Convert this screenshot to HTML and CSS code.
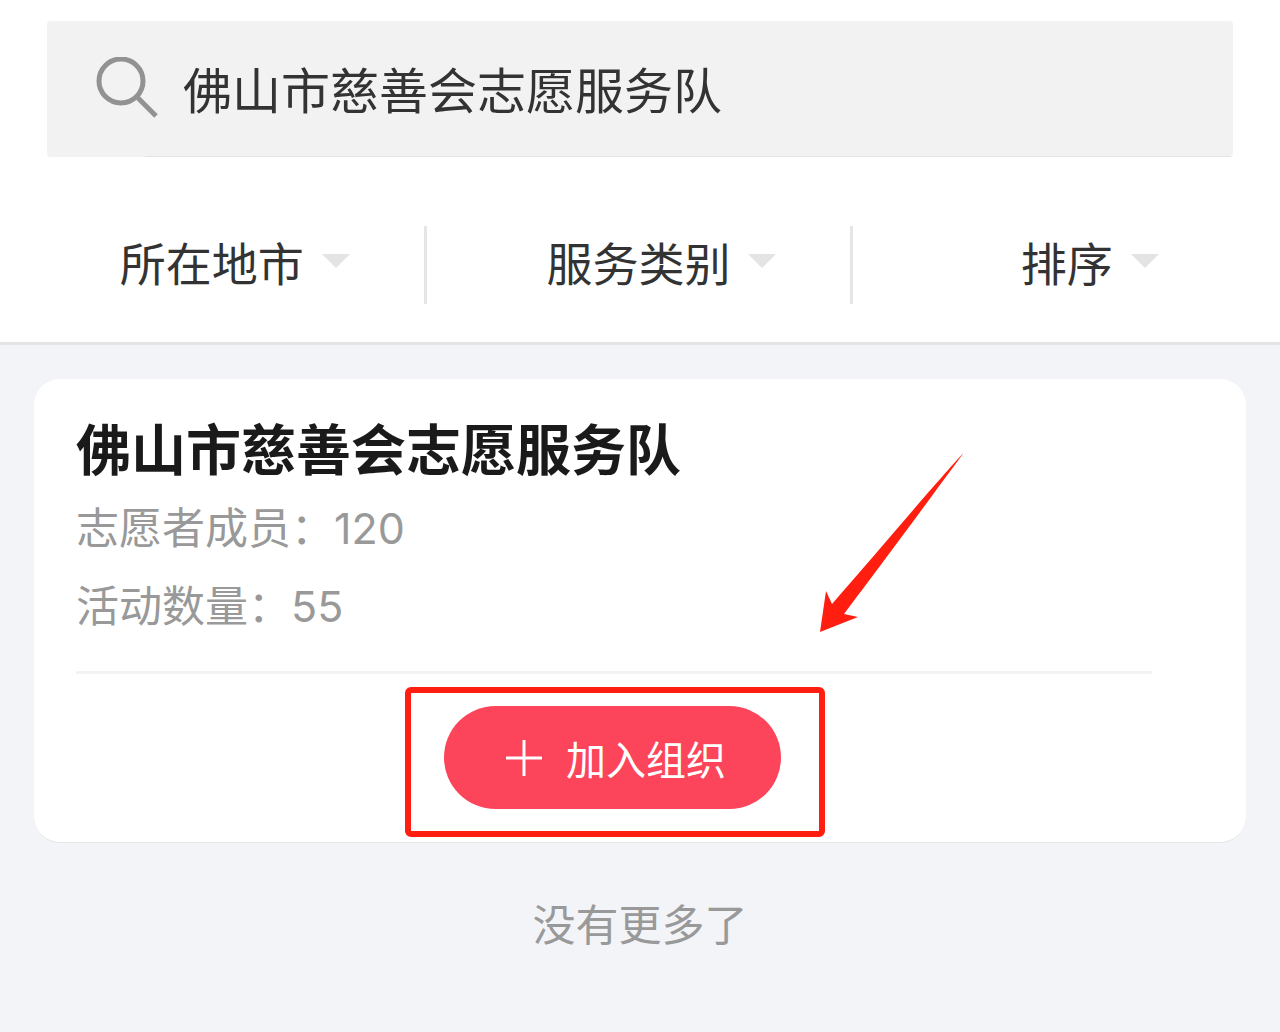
FILE: index.html
```html
<!DOCTYPE html>
<html lang="zh-CN">
<head>
<meta charset="utf-8">
<meta name="viewport" content="width=device-width, initial-scale=1">
<title>佛山市慈善会志愿服务队</title>
<link rel="stylesheet" href="styles.css">
</head>
<body>
<header class="header">
  <form class="search" role="search">
    <svg class="search-icon" viewBox="0 0 64 64" aria-hidden="true">
      <circle cx="26" cy="24" r="22"/>
      <path d="M41 39L61 59"/>
    </svg>
    <input class="search-input" type="text" aria-label="搜索组织" value="佛山市慈善会志愿服务队">
  </form>
  <div class="filters">
    <div class="filter">
      <select class="filter-select" aria-label="所在地市"><option>所在地市</option></select>
      <svg class="caret" viewBox="0 0 28 14" aria-hidden="true"><path d="M0 0H28L14 14Z"/></svg>
    </div>
    <div class="filter">
      <select class="filter-select" aria-label="服务类别"><option>服务类别</option></select>
      <svg class="caret" viewBox="0 0 28 14" aria-hidden="true"><path d="M0 0H28L14 14Z"/></svg>
    </div>
    <div class="filter">
      <select class="filter-select" aria-label="排序"><option>排序</option></select>
      <svg class="caret" viewBox="0 0 28 14" aria-hidden="true"><path d="M0 0H28L14 14Z"/></svg>
    </div>
  </div>
</header>
<main class="results">
  <article class="card">
    <h1 class="card-title">佛山市慈善会志愿服务队</h1>
    <p class="card-info">志愿者成员：120</p>
    <p class="card-info">活动数量：55</p>
    <div class="card-actions">
      <div class="join">
        <button class="join-button" type="button">
          <svg class="plus" viewBox="0 0 36 36" aria-hidden="true"><path d="M18 0V36M0 18H36"/></svg>
          加入组织
        </button>
        <span class="highlight"></span>
        <svg class="arrow" viewBox="0 0 144 180" aria-hidden="true"><path d="M143.500 1C118 28 55 103 12 152L6 139L0 180L38 165L24 162C58 117 112 44 143.500 1Z"/></svg>
      </div>
    </div>
  </article>
  <p class="end">没有更多了</p>
</main>
</body>
</html>
```
FILE: styles.css
```css
* {
  box-sizing: border-box;
}

body {
  margin: 0;
  min-height: 100vh;
  background: #f3f4f8;
  color: #333;
  font-family: Inter, "Noto Sans CJK SC", sans-serif;
}

.header {
  padding: 21px 0 38px;
  background: #fff;
  border-bottom: 3px solid #e4e4e6;
}

.search {
  display: flex;
  align-items: center;
  gap: 24px;
  height: 136px;
  margin: 0 47px;
  padding: 0 48px;
  border-radius: 4px;
  background: linear-gradient(#e4e4e4, #e4e4e4) 98px 100% / 100% 1px no-repeat #f2f2f2;
}

.search-icon {
  flex: none;
  width: 64px;
  height: 64px;
  fill: none;
  stroke: #929292;
  stroke-width: 5;
}

.search-input {
  flex: 1;
  min-width: 0;
  padding: 0 0 4px;
  border: 0;
  outline: 0;
  background: none;
  color: #333;
  font: 49px "Noto Sans CJK SC", sans-serif;
}

.filters {
  display: grid;
  grid-template-columns: repeat(3, 1fr);
  margin-top: 69px;
}

.filter {
  display: flex;
  align-items: center;
  justify-content: center;
  gap: 18px;
  height: 78px;
  padding-left: 46px;
}

.filter:not(:last-child) {
  border-right: 3px solid #e6e6e6;
}

.filter-select {
  appearance: none;
  height: 68px;
  padding: 0;
  border: 0;
  background: none;
  color: #333;
  font: 46px/68px Roboto, "Noto Sans CJK SC", sans-serif;
}

.caret {
  width: 28px;
  height: 14px;
  margin-bottom: 8px;
  fill: #e4e4e4;
  pointer-events: none;
}

.results {
  padding: 34px;
}

.card {
  padding: 36px 94px 33px 42px;
  border-bottom: 1px solid #e6e6e8;
  border-radius: 26px;
  background: #fff;
}

.card-title {
  margin: 0 0 4px;
  color: #1a1a1a;
  font-size: 55px;
  font-weight: 700;
  line-height: 70px;
}

.card-info {
  margin: 0;
  color: #999;
  font-size: 43px;
  line-height: 78px;
}

.card-actions {
  display: flex;
  justify-content: center;
  margin-top: 26px;
  padding: 32px 4px 0 0;
  border-top: 3px solid #f3f3f4;
}

.join {
  position: relative;
}

.join-button {
  display: flex;
  align-items: center;
  justify-content: center;
  gap: 24px;
  width: 337px;
  height: 103px;
  padding: 0 0 0 8px;
  border: 0;
  border-radius: 52px;
  background: #fc455a;
  color: #fff;
  font: 40px/60px "Noto Sans CJK SC", sans-serif;
}

.plus {
  width: 36px;
  height: 36px;
  fill: none;
  stroke: #fff;
  stroke-width: 3;
}

.highlight {
  position: absolute;
  inset: -19px -44px -28px -39px;
  border: 6px solid #ff1e10;
  border-radius: 6px;
  pointer-events: none;
}

.arrow {
  position: absolute;
  right: -183px;
  bottom: 177px;
  width: 144px;
  height: 180px;
  fill: #ff1e10;
  pointer-events: none;
}

.end {
  margin: 50px 0 0;
  color: #999;
  font-size: 43px;
  line-height: 64px;
  text-align: center;
}
```
